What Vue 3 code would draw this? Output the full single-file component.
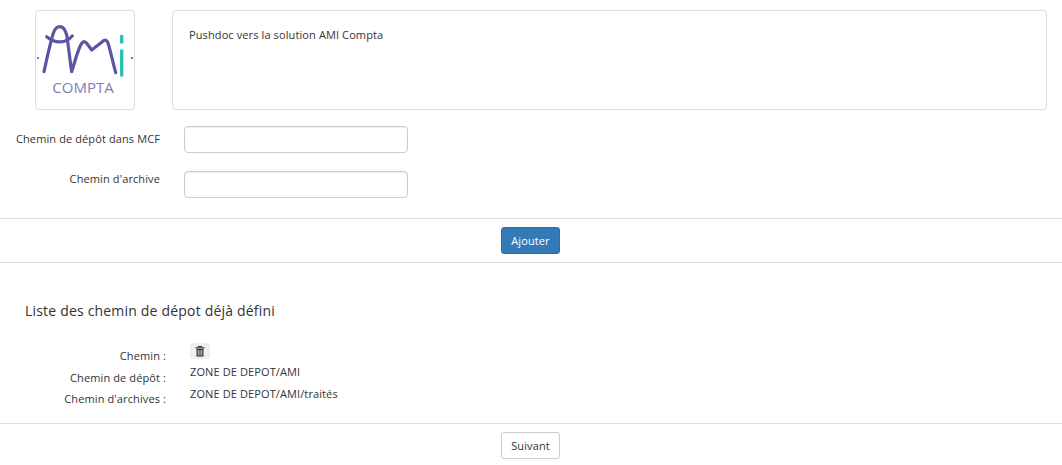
<script setup>
const keys = ['Chemin :', 'Chemin de dépôt :', "Chemin d'archives :"]
const values = ['ZONE DE DEPOT/AMI', 'ZONE DE DEPOT/AMI/traités']
</script>

<template>
  <div class="page">
    <section class="intro">
      <div class="logo-box">
        <svg width="98" height="98" viewBox="0 0 98 98" class="logo">
          <g fill="none" stroke="#5b56a4" stroke-width="3.200" stroke-linecap="round" stroke-linejoin="round">
            <path d="M8 60.700 C11 47 14 33 17.300 22.300 C19 17 21 15.700 24 15.700 C27 15.700 29 18 30.700 24 C32.500 35 34 50 35.700 60.700 C39 50 43 35 46 32 C48 29.500 50 31 52 34 L55.700 39 L66 31 C69 28 71 29 72 32 C74 38 77 52 79.700 61.700" />
            <path d="M10.700 25.700 C18 32 29 33.500 36.300 25" />
          </g>
          <path d="M85.700 24v8.500M85.700 38.500v27" stroke="#22bdb4" stroke-width="3.200" fill="none" />
          <circle cx="2" cy="47" r="1.100" fill="#5b56a4" />
          <circle cx="96" cy="47" r="1.100" fill="#5b56a4" />
          <text x="47" y="81.500" text-anchor="middle" class="logo-text">COMPTA</text>
        </svg>
      </div>
      <div class="desc-box">Pushdoc vers la solution AMI Compta</div>
    </section>

    <section class="form">
      <div class="field first">
        <label>Chemin de dépôt dans MCF</label>
        <input type="text" />
      </div>
      <div class="field second">
        <label>Chemin d'archive</label>
        <input type="text" />
      </div>
    </section>

    <div class="actions primary-actions">
      <button class="btn primary">Ajouter</button>
    </div>

    <section class="list">
      <h2>Liste des chemin de dépot déjà défini</h2>
      <div class="details">
        <div class="keys">
          <span v-for="k in keys" :key="k">{{ k }}</span>
        </div>
        <div class="values">
          <button class="trash" aria-label="Supprimer">
            <svg width="10" height="11" viewBox="0 0 10 11">
              <path d="M3.500 1V0.500h3V1M0.500 1.800h9" stroke="#333" stroke-width="1.200" fill="none" />
              <path d="M1.500 3h7v7.500h-7z" fill="#333" />
              <path d="M3.200 4v5.500M5 4v5.500M6.800 4v5.500" stroke="#f0eeea" stroke-width="0.800" />
            </svg>
          </button>
          <span v-for="v in values" :key="v">{{ v }}</span>
        </div>
      </div>
    </section>

    <div class="actions last-actions">
      <button class="btn">Suivant</button>
    </div>
  </div>
</template>

<style scoped>
.page {
  width: 1062px;
  height: 465px;
  overflow: hidden;
  background: #fff;
  color: #333;
  font-family: "Open Sans", sans-serif;
  font-size: 11px;
  line-height: 16px;
  letter-spacing: 0.11px;
}
.intro {
  display: flex;
  gap: 37px;
  padding: 10px 15px 0 35px;
}
.logo-box,
.desc-box {
  height: 100px;
  box-sizing: border-box;
  border: 1px solid #ddd;
  border-radius: 4px;
}
.logo-box {
  width: 100px;
  flex: none;
}
.logo {
  display: block;
}
.logo-text {
  font-family: "Open Sans", sans-serif;
  font-size: 15px;
  letter-spacing: 0;
  fill: #7f7cba;
}
.desc-box {
  flex: 1;
  padding: 16px;
}
.form {
  height: 109px;
  box-sizing: border-box;
  padding-top: 16px;
  border-bottom: 1px solid #ddd;
}
.field {
  display: flex;
  gap: 24px;
  align-items: flex-start;
}
.field.second {
  margin-top: 18px;
}
.field label {
  width: 160px;
  text-align: right;
  margin-top: 5px;
  white-space: nowrap;
}
.field.second label {
  margin-top: 0;
}
.field input {
  width: 224px;
  height: 27px;
  box-sizing: border-box;
  border: 1px solid #ccc;
  border-radius: 4px;
  background: #fff;
  box-shadow: inset 0 1px 1px rgba(0, 0, 0, 0.075);
}
.actions {
  display: flex;
  justify-content: center;
  padding-right: 1px;
}
.primary-actions {
  height: 44px;
  padding-top: 8px;
  box-sizing: border-box;
  border-bottom: 1px solid #ddd;
}
.btn {
  width: 59px;
  height: 27px;
  padding: 0;
  border: 1px solid #ccc;
  border-radius: 3px;
  background: #fff;
  color: #333;
  font: inherit;
  letter-spacing: inherit;
}
.btn.primary {
  background: #337ab7;
  border-color: #2e6da4;
  color: #fff;
}
.list {
  height: 161px;
  box-sizing: border-box;
  padding-top: 38px;
  border-bottom: 1px solid #ddd;
}
h2 {
  margin: 0 0 22px 25px;
  font-size: 14px;
  line-height: 20px;
  font-weight: 400;
  letter-spacing: 0.19px;
}
.details {
  display: flex;
  gap: 24px;
}
.keys {
  width: 166px;
  text-align: right;
  display: flex;
  flex-direction: column;
  gap: 5.500px;
  padding-top: 5px;
}
.values {
  display: flex;
  flex-direction: column;
  align-items: flex-start;
  gap: 6px;
}
.trash {
  width: 20px;
  height: 16px;
  margin-bottom: -1px;
  padding: 0;
  border: none;
  border-radius: 3px;
  background: #eee;
  display: flex;
  align-items: center;
  justify-content: center;
}
.last-actions {
  padding-top: 8px;
}
</style>
